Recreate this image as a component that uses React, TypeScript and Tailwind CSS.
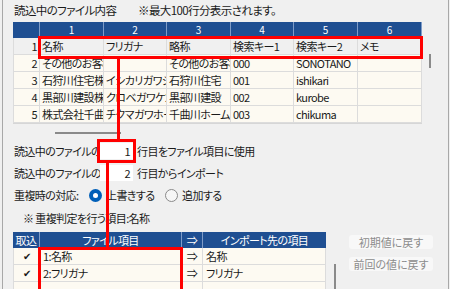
import React from 'react';

const topCols = [64, 63, 64, 63, 64, 64];

const topRows = [
  ['名称', 'フリガナ', '略称', '検索キー1', '検索キー2', 'メモ'],
  ['その他のお客様', '', 'その他のお客様', '000', 'SONOTANO', ''],
  ['石狩川住宅株式会社', 'イシカリガワジュウタク', '石狩川住宅', '001', 'ishikari', ''],
  ['黒部川建設株式会社', 'クロベガワケンセツ', '黒部川建設', '002', 'kurobe', ''],
  ['株式会社千曲川ホーム', 'チクマガワホーム', '千曲川ホーム', '003', 'chikuma', ''],
];

const mapRows = [
  { no: '1:名称', to: '名称' },
  { no: '2:フリガナ', to: 'フリガナ' },
  { no: '', to: '' },
];

function TopGrid() {
  return (
    <div className="w-[409px] border-b border-[#d6d6d6]">
      <div className="flex h-[16px] bg-[#1f4f92] text-[10px] leading-[16px] tracking-normal text-white">
        <div className="w-[27px] border-r border-[#7f9cc8]" />
        {topCols.map((w, i) => (
          <div key={i} className="border-r border-[#7f9cc8] text-center" style={{ width: w }}>
            {i + 1}
          </div>
        ))}
      </div>
      {topRows.map((row, r) => (
        <div
          key={r}
          className={`flex h-[17px] border-b border-[#dcdcdc] leading-[16px] ${r === 0 ? 'bg-[#f0f0f0]' : 'bg-[#fdfaf2]'}`}
        >
          <div className="w-[27px] border-r border-l border-[#dcdcdc] pr-[2px] text-right">{r + 1}</div>
          {row.map((cell, c) => (
            <div
              key={c}
              className="overflow-hidden whitespace-nowrap border-r border-[#dcdcdc] pl-[2px]"
              style={{ width: topCols[c] }}
            >
              {cell}
            </div>
          ))}
        </div>
      ))}
    </div>
  );
}

function Radio({ checked }: { checked?: boolean }) {
  return checked ? (
    <span className="flex h-[13px] w-[13px] items-center justify-center rounded-full bg-[#005fb8]">
      <span className="h-[5px] w-[5px] rounded-full bg-white" />
    </span>
  ) : (
    <span className="h-[13px] w-[13px] rounded-full border border-[#8a8a8a] bg-[#f6f6f6]" />
  );
}

function MapTable() {
  return (
    <div className="w-[313px]">
      <div className="flex h-[16px] bg-[#1f4f92] leading-[16px] text-white">
        <div className="w-[27px] border-r border-[#7f9cc8] text-center">取込</div>
        <div className="w-[142px] border-r border-[#7f9cc8] text-center">ファイル項目</div>
        <div className="w-[21px] border-r border-[#7f9cc8] text-center">⇒</div>
        <div className="w-[123px] text-center">インポート先の項目</div>
      </div>
      {mapRows.map((row, i) => (
        <div key={i} className="flex h-[17px] border-b border-[#dcdcdc] bg-[#fdfaf2] leading-[16px]">
          <div className="w-[27px] border-r border-l border-[#dcdcdc] text-center text-[10px]">{row.no ? '✔' : ''}</div>
          <div className="w-[142px] border-r border-[#dcdcdc] pl-[3px]">{row.no}</div>
          <div className="w-[21px] border-r border-[#dcdcdc] text-center">{row.no ? '⇒' : ''}</div>
          <div className="w-[123px] border-r border-[#dcdcdc] pl-[3px]">{row.to}</div>
        </div>
      ))}
    </div>
  );
}

export default function App() {
  return (
    <div className="relative h-[289px] w-[450px] overflow-hidden bg-[#f0f0f0] font-['Noto_Sans_CJK_JP',sans-serif] text-[11px] tracking-[-0.6px] text-[#1a1a1a] [font-feature-settings:'palt']">
      <div className="ml-[2px] h-full w-[447px] border-l border-r border-[#a8a8a8] pl-[10px]">
        <div className="flex h-[22px] items-center whitespace-nowrap text-[11.5px]">
          <span className="ml-[1px] w-[124px]">読込中のファイル内容</span>
          <span>※最大100行分表示されます。</span>
        </div>

        <div className="flex">
          <TopGrid />
          <div className="ml-[7px] pt-[32px]">
            <div className="h-[14px] w-[2px] bg-[#8a8a8a]" />
          </div>
        </div>

        <div className="mt-[8px] ml-[42px] h-[2px] w-[66px] bg-[#8a8a8a]" />

        <div className="mt-[8px] flex flex-col whitespace-nowrap">
          <div className="flex h-[18px] items-center">
            <span className="ml-[1px] w-[86px] shrink-0">読込中のファイルの</span>
            <span className="h-[16px] w-[33px] shrink-0 bg-white pr-[3px] text-right leading-[16px]">1</span>
            <span className="ml-[4px]">行目をファイル項目に使用</span>
          </div>
          <div className="mt-[4px] flex h-[18px] items-center">
            <span className="ml-[1px] w-[86px] shrink-0">読込中のファイルの</span>
            <span className="h-[16px] w-[33px] shrink-0 bg-white pr-[3px] text-right leading-[16px]">2</span>
            <span className="ml-[4px]">行目からインポート</span>
          </div>
          <div className="mt-[4px] flex h-[18px] items-center">
            <span className="ml-[1px] w-[75px]">重複時の対応:</span>
            <Radio checked />
            <span className="ml-[4px] w-[59px]">上書きする</span>
            <Radio />
            <span className="ml-[4px]">追加する</span>
          </div>
          <div className="mt-[5px] flex h-[18px] items-center">
            <span className="ml-[10px]">※ 重複判定を行う項目:名称</span>
          </div>
        </div>

        <div className="mt-[5px] flex">
          <MapTable />
          <div className="ml-[8px] pt-[32px]">
            <div className="h-[30px] w-[2px] bg-[#8a8a8a]" />
          </div>
          <div className="ml-[13px] flex flex-col gap-[8px] pt-[3px]">
            <div className="h-[14px] w-[84px] rounded-[3px] bg-[#f8f8f8] text-center text-[11px] leading-[14px] tracking-normal text-[#8c8c8c]">
              初期値に戻す
            </div>
            <div className="h-[14px] w-[84px] rounded-[3px] bg-[#f8f8f8] text-center text-[11px] leading-[14px] tracking-normal text-[#8c8c8c]">
              前回の値に戻す
            </div>
          </div>
        </div>
      </div>

      {/* annotations */}
      <div className="absolute left-[38px] top-[36px] h-[23px] w-[385px] border-[3px] border-[#ff0000]" />
      <div className="absolute left-[117px] top-[58px] h-[82px] w-[3px] bg-[#ff0000]" />
      <div className="absolute left-[97px] top-[139px] h-[24px] w-[39px] border-[3px] border-[#ff0000]" />
      <div className="absolute left-[106px] top-[162px] h-[86px] w-[3px] bg-[#ff0000]" />
      <div className="absolute left-[38px] top-[247px] h-[50px] w-[145px] border-[3px] border-[#ff0000]" />
    </div>
  );
}
